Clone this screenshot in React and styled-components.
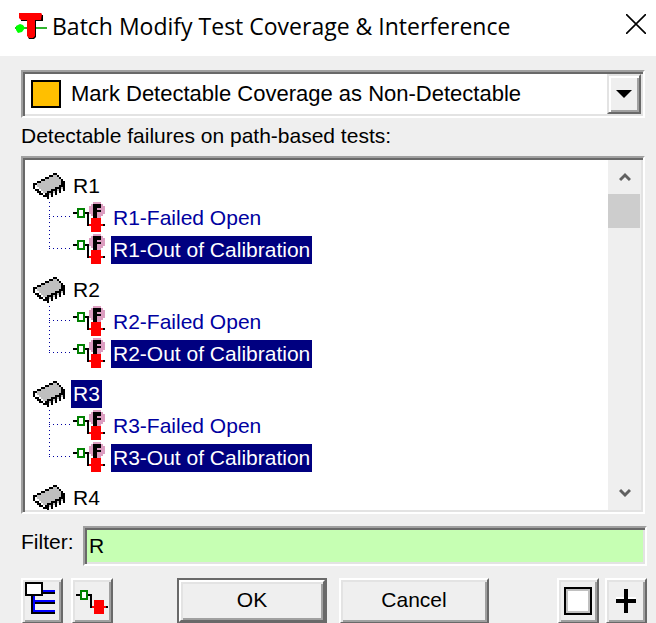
import React, { useState } from "react";
import styled, { createGlobalStyle, css } from "styled-components";

const FAILURES = ["Failed Open", "Out of Calibration"];

const PARTS = [
  { name: "R1", modes: FAILURES },
  { name: "R2", modes: FAILURES },
  { name: "R3", modes: FAILURES },
  { name: "R4", modes: [] },
];

// one string per row of the 16px icon, drawn at double size
const CHIP = [
  "..........kk....",
  "........kkggk...",
  "......kkgggggk..",
  "....kkggggggggk.",
  "..kkggggggggggkk",
  "kkggggggggggggkk",
  "kwgggggggggggkkk",
  "kwwggggggggkkkgk",
  ".kkwgggggkkkgk.k",
  "..kkwggkkkgk.k..",
  "...kkwkkgk.k....",
  ".....kkk.k......",
  ".......k........",
];

const COLORS = { k: "#000", g: "#bfbfbf", w: "#fff" };

function ChipIcon() {
  return (
    <svg width="32" height="26" viewBox="0 0 16 13" shapeRendering="crispEdges" aria-hidden="true">
      {CHIP.flatMap((line, y) =>
        [...line].map((c, x) =>
          c === "." ? null : (
            <rect key={`${x}-${y}`} x={x} y={y} width="1" height="1" fill={COLORS[c]} />
          )
        )
      )}
    </svg>
  );
}

function FailureIcon() {
  return (
    <svg width="32" height="32" viewBox="0 0 16 16" shapeRendering="crispEdges" aria-hidden="true">
      <path fill="#dc9dc0" d="M10 0h4v1h1v1h1v4h-1v1h-1v1h-4v-1h-1v-1h-1v-4h1v-1h1z" />
      <path d="M10 1h4v2h-2v1h2v1h-2v3h-2zM0 5h2v1h-2zM6 5h2v6h1v1h-2v-6h-1zM14 11h2v1h-2z" />
      <path fill="#008000" fillRule="evenodd" d="M2 3h4v5h-4zM3 4v3h2v-3z" />
      <path fill="#fff" d="M3 4h2v3h-2z" />
      <path fill="#f00" d="M9 8h5v7h-5zM8 11h7v1h-7z" />
    </svg>
  );
}

function TestIcon() {
  return (
    <svg width="32" height="26" viewBox="0 0 16 13" shapeRendering="crispEdges" aria-hidden="true">
      <path d="M0 3h2v1h-2zM6 3h2v6h1v1h-2v-6h-1zM15 9h1v1h-1z" />
      <path fill="#008000" fillRule="evenodd" d="M2 1h4v5h-4zM3 2v3h2v-3z" />
      <path fill="#fff" d="M3 2h2v3h-2z" />
      <path fill="#f00" d="M9 6h5v7h-5zM8 9h7v1h-7z" />
    </svg>
  );
}

function TreeIcon() {
  return (
    <svg width="34" height="38" viewBox="0 0 17 19" shapeRendering="crispEdges" aria-hidden="true">
      <path d="M3 7h1v8h11v1h-12zM4 10h11v1h-11zM9 5h6v1h-6z" />
      <path fill="#00f" d="M9 4h6v1h-6zM4 7h1v2h10v1h-10v4h10v1h-11z" />
      <path d="M0 0h9v7h-9z" />
      <path fill="#fff" d="M1 1h7v5h-7z" />
    </svg>
  );
}

function LogoIcon() {
  return (
    <svg width="32" height="28" viewBox="0 0 32 28" aria-hidden="true">
      <path stroke="#2fb32f" strokeWidth="2" d="M0 16h32" />
      <path fill="#00ff00" d="M1 14l4-2 3 1 2 3-3 4-4 1-2-3z" />
      <path d="M6 3h22v6h-7v16l-2 2h-5l-1-2v-16h-7z" />
      <path fill="#f00" d="M4 1h22l1 1-1 6h-6v16l-2 2h-4l-2-2v-16h-6l-2-2z" />
    </svg>
  );
}

export default function App() {
  const [filter, setFilter] = useState("R");
  const [selected, setSelected] = useState([
    "R1-Out of Calibration",
    "R2-Out of Calibration",
    "R3",
    "R3-Out of Calibration",
  ]);

  const toggle = (name) =>
    setSelected((prev) =>
      prev.includes(name) ? prev.filter((n) => n !== name) : [...prev, name]
    );

  return (
    <Dialog>
      <GlobalStyle />
      <TitleBar>
        <LogoIcon />
        <Title>Batch Modify Test Coverage &amp; Interference</Title>
        <CloseButton type="button" aria-label="Close">
          <svg width="20" height="20" viewBox="0 0 20 20" aria-hidden="true">
            <path d="M0 0l20 20M20 0L0 20" stroke="#000" strokeWidth="1.6" />
          </svg>
        </CloseButton>
      </TitleBar>

      <Body>
        <Combo>
          <Swatch />
          <Select aria-label="Action">
            <option>Mark Detectable Coverage as Non-Detectable</option>
          </Select>
          <DropArrow>
            <svg width="16" height="8" viewBox="0 0 16 8" aria-hidden="true">
              <path d="M0 0h16l-8 8z" />
            </svg>
          </DropArrow>
        </Combo>

        <Caption id="failures">Detectable failures on path-based tests:</Caption>
        <ListBox>
          <Tree aria-labelledby="failures">
            {PARTS.filter((p) => p.name.includes(filter.toUpperCase())).map((part) => (
              <Group key={part.name}>
                <PartRow>
                  <ChipIcon />
                  <Item
                    type="button"
                    $selected={selected.includes(part.name)}
                    onClick={() => toggle(part.name)}
                  >
                    {part.name}
                  </Item>
                </PartRow>
                <Children>
                  {part.modes.map((mode) => {
                    const name = `${part.name}-${mode}`;
                    return (
                      <FailureRow key={name}>
                        <FailureIcon />
                        <Item
                          type="button"
                          $failure
                          $selected={selected.includes(name)}
                          onClick={() => toggle(name)}
                        >
                          {name}
                        </Item>
                      </FailureRow>
                    );
                  })}
                </Children>
              </Group>
            ))}
          </Tree>
          <ScrollBar>
            <ScrollButton type="button" aria-label="Scroll up">
              <svg width="12" height="10" viewBox="0 0 12 10" aria-hidden="true">
                <path d="M1 8l5-5 5 5" fill="none" stroke="#606060" strokeWidth="3" />
              </svg>
            </ScrollButton>
            <Thumb />
            <ScrollButton type="button" aria-label="Scroll down">
              <svg width="12" height="10" viewBox="0 0 12 10" aria-hidden="true">
                <path d="M1 2l5 5 5-5" fill="none" stroke="#606060" strokeWidth="3" />
              </svg>
            </ScrollButton>
          </ScrollBar>
        </ListBox>

        <FilterRow>
          <FilterLabel htmlFor="filter">Filter:</FilterLabel>
          <FilterInput id="filter" value={filter} onChange={(e) => setFilter(e.target.value)} />
        </FilterRow>

        <Footer>
          <ButtonGroup>
            <ToolButton type="button" aria-label="Expand tree">
              <TreeIcon />
            </ToolButton>
            <ToolButton type="button" aria-label="Show tests">
              <TestIcon />
            </ToolButton>
          </ButtonGroup>
          <Actions>
            <DefaultFrame>
              <PushButton type="button">OK</PushButton>
            </DefaultFrame>
            <PushButton type="button">Cancel</PushButton>
          </Actions>
          <ButtonGroup $tight>
            <ToolButton type="button" aria-label="Clear selection">
              <svg width="28" height="28" viewBox="0 0 28 28" shapeRendering="crispEdges" aria-hidden="true">
                <path d="M0 0h28v28h-28z" />
                <path fill="#c0c0c0" d="M2 2h24v24h-24z" />
                <path fill="#fff" d="M4 4h20v20h-20z" />
              </svg>
            </ToolButton>
            <ToolButton type="button" aria-label="Add">
              <svg width="20" height="24" viewBox="0 0 20 24" shapeRendering="crispEdges" aria-hidden="true">
                <path fill="#fff" d="M0 8h20v2h-20z" />
                <path d="M8 0h4v10h8v4h-8v10h-4v-10h-8v-4h8z" />
              </svg>
            </ToolButton>
          </ButtonGroup>
        </Footer>
      </Body>
    </Dialog>
  );
}

const GlobalStyle = createGlobalStyle`
  * {
    box-sizing: border-box;
  }

  body {
    margin: 0;
    overflow: hidden;
    background: #efefef;
  }

  button,
  input,
  select {
    font: inherit;
    color: inherit;
  }

  svg {
    display: block;
    flex: none;
  }
`;

const sunken = css`
  border: 2px solid;
  border-color: #a0a0a0 #fff #fff #a0a0a0;
  box-shadow: inset 2px 2px #696969, inset -2px -2px #e3e3e3;
`;

const raised = css`
  border: 2px solid;
  border-color: #fff #696969 #696969 #fff;
  box-shadow: inset 2px 2px #e3e3e3, inset -2px -2px #a0a0a0;
`;

const Dialog = styled.div`
  display: flex;
  flex-direction: column;
  height: 100vh;
  font-family: "Liberation Sans", Arial, sans-serif;
  font-size: 21px;
  line-height: 28px;
  color: #000;
`;

const TitleBar = styled.header`
  display: flex;
  align-items: center;
  flex: none;
  height: 56px;
  padding: 0 10px 4px 15px;
  background: #fff;
`;

const Title = styled.h1`
  flex: 1;
  margin: 0 0 0 5px;
  font-family: "Open Sans", "Noto Sans", sans-serif;
  font-size: 23px;
  font-weight: 400;
  white-space: nowrap;
`;

const CloseButton = styled.button`
  padding: 0 0 4px;
  border: 0;
  background: none;
`;

const Body = styled.main`
  display: flex;
  flex-direction: column;
  flex: 1;
  padding: 14px 9px 0 21px;
`;

const Combo = styled.div`
  ${sunken}
  display: flex;
  align-items: center;
  flex: none;
  height: 48px;
  margin-right: 2px;
  padding: 2px 2px 2px 8px;
  background: #fff;
  font-size: 22px;
`;

const Swatch = styled.span`
  flex: none;
  width: 30px;
  height: 28px;
  border: 2px solid #000;
  background: #ffbf00;
`;

const Select = styled.select`
  flex: 1;
  min-width: 0;
  padding: 0 0 0 10px;
  border: 0;
  appearance: none;
  background: transparent;
`;

const DropArrow = styled.span`
  display: flex;
  align-items: center;
  justify-content: center;
  align-self: stretch;
  width: 34px;
  border: 2px solid;
  border-color: #e3e3e3 #696969 #696969 #e3e3e3;
  box-shadow: inset 2px 2px #fff, inset -2px -2px #a0a0a0;
  background: #efefef;
  pointer-events: none;
`;

const Caption = styled.div`
  margin: 4px 0 6px;
`;

const ListBox = styled.div`
  ${sunken}
  display: flex;
  flex: none;
  height: 358px;
  margin-right: 2px;
  padding: 2px;
  background: #fff;
`;

const Tree = styled.ul`
  flex: 1;
  margin: 0;
  padding: 10px 0 0 8px;
  overflow: hidden;
  list-style: none;
`;

const Group = styled.li`
  margin-bottom: 8px;
`;

const PartRow = styled.div`
  display: flex;
  align-items: center;
  gap: 6px;
  height: 32px;
`;

const Children = styled.ul`
  margin: 0 0 0 16px;
  padding: 0;
  list-style: none;
`;

const FailureRow = styled.li`
  display: flex;
  align-items: center;
  height: 32px;

  /* dotted branch lines */
  &::before {
    content: "";
    flex: none;
    width: 24px;
    height: 32px;
    background:
      repeating-linear-gradient(#0000a0 0 1px, transparent 1px 4px) 0 0 / 1px 100% no-repeat,
      repeating-linear-gradient(90deg, #0000a0 0 1px, transparent 1px 4px) 0 14px / 100% 1px no-repeat;
  }

  &:last-child::before {
    background-size: 1px 14px, 100% 1px;
  }

  button {
    margin-left: 6px;
  }
`;

const Item = styled.button`
  height: 28px;
  padding: 0 2px;
  border: 0;
  background: ${({ $selected }) => ($selected ? "#000080" : "transparent")};
  color: ${({ $selected, $failure }) => ($selected ? "#fff" : $failure ? "#0000a0" : "#000")};
  white-space: nowrap;
`;

const ScrollBar = styled.div`
  display: flex;
  flex-direction: column;
  width: 33px;
  background: #efefef;
`;

const ScrollButton = styled.button`
  display: flex;
  align-items: center;
  justify-content: center;
  height: 34px;
  padding: 0;
  border: 0;
  background: none;

  &:last-child {
    margin-top: auto;
  }
`;

const Thumb = styled.div`
  height: 34px;
  margin-right: 1px;
  background: #cdcdcd;
`;

const FilterRow = styled.div`
  display: flex;
  margin-top: 12px;
`;

const FilterLabel = styled.label`
  width: 62px;
  padding-top: 2px;
`;

const FilterInput = styled.input`
  ${sunken}
  flex: 1;
  min-width: 0;
  height: 40px;
  padding: 0 4px;
  border-radius: 0;
  outline: none;
  background: #c6ffb3;
`;

const Footer = styled.footer`
  display: flex;
  justify-content: space-between;
  margin-top: 12px;
`;

const ButtonGroup = styled.div`
  display: flex;
  gap: ${({ $tight }) => ($tight ? "6px" : "8px")};
`;

const Actions = styled.div`
  display: flex;
  gap: 12px;
  padding-right: 4px;
`;

const ToolButton = styled.button`
  ${raised}
  display: flex;
  align-items: center;
  justify-content: center;
  width: 42px;
  height: 46px;
  padding: 0;
  background: #efefef;
`;

const PushButton = styled.button`
  ${raised}
  width: 150px;
  height: 46px;
  padding: 0 0 2px;
  background: #efefef;
`;

const DefaultFrame = styled.div`
  display: flex;
  width: 150px;
  height: 46px;
  border: 2px solid #696969;

  ${PushButton} {
    flex: 1;
    height: 42px;
  }
`;
